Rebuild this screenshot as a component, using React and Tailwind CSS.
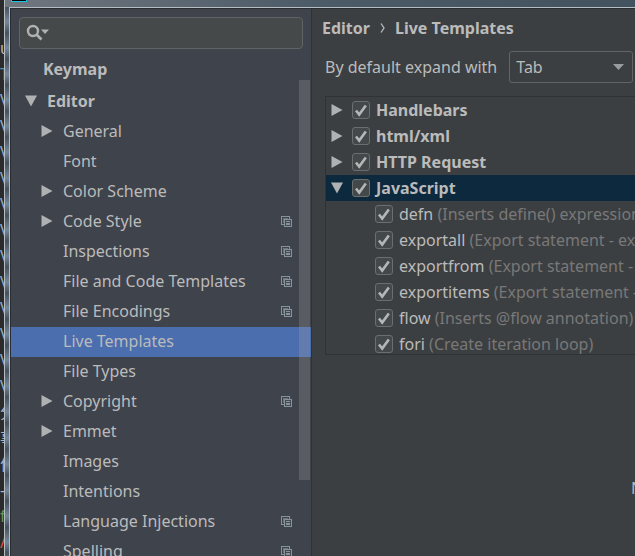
import React from "react";

const FONT = "font-['Noto_Sans','Noto_Sans_CJK_SC',sans-serif]";

const settings = [
  { label: "General", branch: true },
  { label: "Font" },
  { label: "Color Scheme", branch: true },
  { label: "Code Style", branch: true, project: true },
  { label: "Inspections", project: true },
  { label: "File and Code Templates", project: true },
  { label: "File Encodings", project: true },
  { label: "Live Templates", selected: true },
  { label: "File Types" },
  { label: "Copyright", branch: true, project: true },
  { label: "Emmet", branch: true },
  { label: "Images" },
  { label: "Intentions" },
  { label: "Language Injections", project: true },
  { label: "Spelling", project: true },
];

const groups = [
  { name: "Handlebars" },
  { name: "html/xml" },
  { name: "HTTP Request" },
  { name: "JavaScript", open: true },
];

const templates = [
  { name: "defn", note: "(Inserts define() expression)" },
  { name: "exportall", note: "(Export statement - export all)" },
  { name: "exportfrom", note: "(Export statement - export from)" },
  { name: "exportitems", note: "(Export statement - export items)" },
  { name: "flow", note: "(Inserts @flow annotation)" },
  { name: "fori", note: "(Create iteration loop)" },
];

const editorLines = [
  { text: "", color: "" },
  { text: "u", color: "text-[#b8b8b8]" },
  { text: "T", color: "text-[#5590b5]" },
  { text: "V", color: "text-[#8fb0c8]" },
  { text: "V", color: "text-[#8fb0c8]" },
  { text: "V", color: "text-[#8fb0c8]" },
  { text: "V", color: "text-[#8fb0c8]" },
  { text: "V", color: "text-[#8fb0c8]" },
  { text: "V", color: "text-[#8fb0c8]" },
  { text: "V", color: "text-[#8fb0c8]" },
  { text: "V", color: "text-[#8fb0c8]" },
  { text: "V", color: "text-[#8fb0c8]" },
  { text: "V", color: "text-[#8fb0c8]" },
  { text: "V", color: "text-[#8fb0c8]" },
  { text: "V", color: "text-[#8fb0c8]" },
  { text: "分", color: "text-[#a9b7c6]" },
  { text: "事", color: "text-[#a9b7c6]" },
  { text: "何", color: "text-[#a9b7c6]" },
  { text: "-", color: "text-[#a9b7c6]" },
  { text: "f", color: "text-[#6a9955]" },
  { text: "/", color: "text-[#e0503c]" },
];

function Arrow({ open }) {
  return (
    <svg width="12" height="12" viewBox="0 0 12 12" className="shrink-0 fill-[#afb1b3]" aria-hidden="true">
      <path d={open ? "M0 0.5h12L6 11.5z" : "M0.5 0v12L11.5 6z"} />
    </svg>
  );
}

function ProjectIcon() {
  return (
    <svg width="11" height="11" viewBox="0 0 11 11" className="shrink-0" shapeRendering="crispEdges" aria-hidden="true">
      <path d="M0.5 8.5v-8h8v2" fill="none" stroke="#87939a" />
      <path d="M0 8.5h3" stroke="#87939a" />
      <path d="M2 2h5v1H3v4H2z" fill="#69747b" />
      <rect x="3.5" y="3.5" width="7" height="7" fill="#434a53" stroke="#87939a" />
      <path d="M5 5.5h4M5 7.5h4M5 8.5h4" stroke="#87939a" />
    </svg>
  );
}

function Check({ id }) {
  return (
    <span className="grid size-[18px] shrink-0">
      <input
        id={id}
        type="checkbox"
        defaultChecked
        className="peer col-start-1 row-start-1 size-[18px] appearance-none rounded-[3px] border border-[#6b6e6f] bg-[#43494a]"
      />
      <svg
        viewBox="0 0 18 18"
        className="pointer-events-none invisible col-start-1 row-start-1 size-[18px] peer-checked:visible"
        aria-hidden="true"
      >
        <path d="M4 9.5l3.2 4L13.8 4.5" fill="none" stroke="#b4b6b7" strokeWidth="2.6" />
      </svg>
    </span>
  );
}

function Sidebar() {
  return (
    <aside className="relative w-[301px] shrink-0 overflow-hidden border-r border-[#303234] bg-[#3f434c]">
      <div className="px-2 pt-2">
        <label className="flex h-8 items-center rounded-[4px] border border-[#616466] bg-[#454949] pl-[6px]">
          <svg width="24" height="18" viewBox="0 0 24 18" aria-hidden="true">
            <circle cx="7" cy="7" r="5" fill="none" stroke="#afb1b3" strokeWidth="2.4" />
            <path d="M10.5 10.5l5 5" stroke="#afb1b3" strokeWidth="2.6" />
            <path d="M15 5.5h8l-4 4.5z" fill="#afb1b3" />
          </svg>
          <input type="text" aria-label="Search settings" className="min-w-0 flex-1 bg-transparent text-[#bbbbbb] outline-none" />
        </label>
      </div>
      <nav className="pt-1 whitespace-nowrap">
        <a href="#keymap" className="flex h-8 items-center pl-8 font-bold">Keymap</a>
        <a href="#editor" className="flex h-8 items-center gap-[10px] pl-[14px] font-bold">
          <Arrow open />
          Editor
        </a>
        {settings.map((s) => (
          <a
            key={s.label}
            href={"#" + s.label}
            className={"flex h-[30px] items-center gap-[10px] pr-[19px] pb-[2px] pl-[30px] " + (s.selected ? "bg-[#4b6eaf]" : "")}
          >
            <span className="flex w-3">{s.branch && <Arrow />}</span>
            <span className="flex-1">{s.label}</span>
            {s.project && <ProjectIcon />}
          </a>
        ))}
      </nav>
      <div className="absolute top-[71px] right-px h-[400px] w-[11px] bg-[#a6a6a6]/25" />
    </aside>
  );
}

function Content() {
  return (
    <main className="min-w-0 flex-1 overflow-hidden whitespace-nowrap">
      <h1 className="flex items-center gap-[10px] px-[10px] pt-[7px] leading-6 font-bold">
        Editor
        <svg width="5" height="10" viewBox="0 0 5 10" aria-hidden="true">
          <path d="M1 0.5L4 5 1 9.5" fill="none" stroke="#bbbbbb" strokeWidth="1.3" />
        </svg>
        Live Templates
      </h1>
      <div className="flex items-center gap-3 pt-[11px] pr-[2px] pl-[13px]">
        <label htmlFor="expand">By default expand with</label>
        <div className="grid flex-1 items-center">
          <select
            id="expand"
            className="col-start-1 row-start-1 h-8 w-full appearance-none rounded-[3px] border border-[#646464] bg-[#3c3f41] pl-[6px] text-[#bbbbbb]"
          >
            <option>Tab</option>
          </select>
          <svg width="11" height="6" viewBox="0 0 11 6" className="pointer-events-none col-start-1 row-start-1 mr-[9px] justify-self-end" aria-hidden="true">
            <path d="M0 0h11L5.5 6z" fill="#9a9da0" />
          </svg>
        </div>
      </div>
      <ul className="mt-[13px] ml-[13px] h-[259px] overflow-hidden border border-r-0 border-[#303234]">
        {groups.map((g) => (
          <li key={g.name} className={"flex h-[26px] items-center gap-[9px] pl-[5px] " + (g.open ? "bg-[#0d293e]" : "")}>
            <Arrow open={g.open} />
            <span className="flex items-center gap-[6px]">
              <Check id={g.name} />
              <label htmlFor={g.name} className="font-bold">{g.name}</label>
            </span>
          </li>
        ))}
        {templates.map((t) => (
          <li key={t.name} className="flex h-[26px] items-center gap-[6px] pl-[49px]">
            <Check id={t.name} />
            <label htmlFor={t.name}>
              {t.name} <span className="text-[#787878]">{t.note}</span>
            </label>
          </li>
        ))}
      </ul>
      <p className="mt-[120px] ml-auto w-1 overflow-hidden">N</p>
    </main>
  );
}

export default function App() {
  return (
    <div className={"flex h-screen overflow-hidden bg-[#2b2b2b] text-[16px] leading-[26px] text-[#bbbbbb] " + FONT}>
      <div className="flex w-1 shrink-0 flex-col items-start overflow-hidden pt-[9px]" aria-hidden="true">
        {editorLines.map((l, i) => (
          <span key={i} className={"h-[26px] shrink-0 " + l.color}>{l.text}</span>
        ))}
      </div>
      <div className="flex min-w-0 flex-1 flex-col border-l border-[#b5bdc2] bg-[#46525f]">
        <div className="flex h-[7px] shrink-0 bg-linear-to-r from-[#70767e] via-[#4c5b68] to-[#43525f] pl-[6px]">
          <div className="h-[2px] w-4 border-x border-b border-[#17c3e6] bg-black" />
        </div>
        <div className="flex min-h-0 flex-1">
          <div className="w-1 shrink-0 bg-[repeating-linear-gradient(#46525e_0px,#74879a_15px,#46525e_26px)]" />
          <div className="flex min-w-0 flex-1 border-t border-l border-[#b5bdc2]">
            <div className="flex min-w-0 flex-1 border-t border-l border-[#2b2d30] bg-[#3c3f41]">
              <Sidebar />
              <Content />
            </div>
          </div>
        </div>
      </div>
    </div>
  );
}
